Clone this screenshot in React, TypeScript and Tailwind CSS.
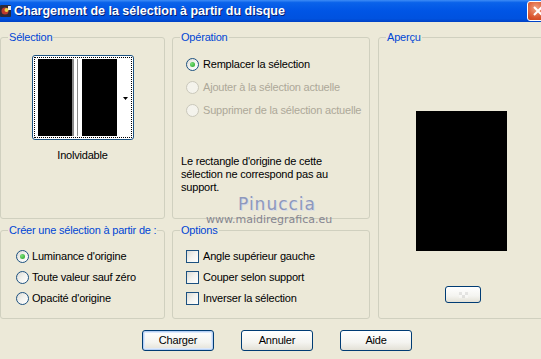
import React from 'react';

const Radio = ({ checked = false, disabled = false }: { checked?: boolean; disabled?: boolean }) => (
  <span
    className={`flex w-[13px] h-[13px] shrink-0 items-center justify-center rounded-full border ${
      disabled
        ? 'border-[#CAC8BB] bg-[#F4F3EC]'
        : 'border-[#1C5180] bg-[linear-gradient(135deg,#DCDBD5_0%,#F3F3EF_50%,#FFFFFF_100%)]'
    }`}
  >
    {checked && <span className="w-[5px] h-[5px] rounded-full bg-[radial-gradient(circle_at_35%_35%,#7BE07B,#21A121)]" />}
  </span>
);

const Check = () => (
  <span className="w-[13px] h-[13px] shrink-0 border border-[#1C5180] bg-[linear-gradient(135deg,#DCDBD5_0%,#F3F3EF_50%,#FFFFFF_100%)]" />
);

const Legend = ({ children }: { children: React.ReactNode }) => (
  <legend className="ml-[7px] whitespace-nowrap px-[1px] leading-[13px] text-[#0046D5]">{children}</legend>
);

const XpButton = ({ label, isDefault }: { label: string; isDefault?: boolean }) => (
  <button
    className={`w-[72px] h-[21px] rounded-[3px] border border-[#003C74] bg-[linear-gradient(to_bottom,#FFFFFF_0%,#F4F4F0_60%,#E3E1D6_100%)] text-[11px] leading-[13px] text-black ${
      isDefault ? 'shadow-[inset_0_0_0_1px_#B7D0F5,inset_0_0_0_2px_#DCE8FA]' : ''
    }`}
  >
    {label}
  </button>
);

export default function App() {
  return (
    <div className="relative w-[541px] h-[359px] overflow-hidden bg-[#ECE9D8] font-['Liberation_Sans',Arial,sans-serif] text-[11px] tracking-[-0.2px] text-black">
      {/* title bar */}
      <div className="flex h-[22px] items-center bg-[linear-gradient(to_bottom,#3D8CF6_0%,#0A62EA_12%,#0055E5_50%,#0052DF_85%,#0041C4_100%)]">
        <svg width="12" height="14" viewBox="0 0 12 14" className="shrink-0">
          <rect x="0" y="1" width="11" height="12" rx="1" fill="#2A2A3A" />
          <circle cx="5" cy="7" r="3.5" fill="#C0392B" />
          <circle cx="6.5" cy="6" r="2" fill="#E7D34A" />
          <rect x="8" y="2" width="3" height="4" fill="#EAEAEA" />
        </svg>
        <span className="ml-[2px] text-[12.5px] font-bold tracking-normal text-white [text-shadow:1px_1px_0_#0A1E6E]">
          Chargement de la sélection à partir du disque
        </span>
        <div className="ml-auto mr-[-8px] flex h-[20px] w-[22px] items-center justify-center rounded-[3px] border border-white bg-[radial-gradient(circle_at_40%_35%,#F0A080,#D8532C_60%,#C0401A)]">
          <svg width="12" height="12" viewBox="0 0 12 12">
            <path d="M2 2L10 10M10 2L2 10" stroke="white" strokeWidth="2" />
          </svg>
        </div>
      </div>

      {/* body */}
      <div className="grid grid-cols-[165px_198px_172px] grid-rows-[188px_95px] gap-x-[7px] gap-y-[5px] pt-[9px]">
        {/* Sélection */}
        <fieldset className="min-w-0 rounded-[3px] border border-[#D0D0BF]">
          <Legend>Sélection</Legend>
          <div className="mx-auto mt-[11px] h-[85px] w-[102px] rounded-[3px] border border-[#1C5180] bg-white p-[1px]">
            <div className="flex h-full w-full border border-dotted border-black bg-white pb-[1px] pl-[3px] pt-[1px]">
              <div className="h-full w-[34px] bg-black" />
              <div className="h-full w-[2px] bg-[#8A8A8A]" />
              <div className="h-full w-[3px] bg-white" />
              <div className="h-full w-[1px] bg-[#8A8A8A]" />
              <div className="h-full w-[4px] bg-white" />
              <div className="h-full w-[35px] bg-black" />
              <div className="relative h-full flex-1 bg-white">
                <svg width="5" height="3" viewBox="0 0 5 3" className="absolute right-[3px] top-[38px]">
                  <path d="M0 0H5L2.5 3Z" fill="black" />
                </svg>
              </div>
            </div>
          </div>
          <div className="mt-[9px] text-center leading-[13px]">Inolvidable</div>
        </fieldset>

        {/* Opération */}
        <fieldset className="min-w-0 rounded-[3px] border border-[#D0D0BF]">
          <Legend>Opération</Legend>
          <div className="flex flex-col gap-[10px] pl-[13px] pt-[14px]">
            <div className="flex h-[13px] items-center gap-[4px]">
              <Radio checked />
              <span className="leading-[13px]">Remplacer la sélection</span>
            </div>
            <div className="flex h-[13px] items-center gap-[4px] text-[#ACA899]">
              <Radio disabled />
              <span className="leading-[13px]">Ajouter à la sélection actuelle</span>
            </div>
            <div className="flex h-[13px] items-center gap-[4px] text-[#ACA899]">
              <Radio disabled />
              <span className="leading-[13px]">Supprimer de la sélection actuelle</span>
            </div>
          </div>
          <p className="mt-[38px] pl-[8px] leading-[13px]">
            Le rectangle d'origine de cette
            <br />
            sélection ne correspond pas au
            <br />
            support.
          </p>
        </fieldset>

        {/* Aperçu */}
        <fieldset className="row-span-2 ml-[1px] min-w-0 rounded-[3px] border border-[#D0D0BF]">
          <Legend>Aperçu</Legend>
          <div className="ml-[37px] mt-[67px] h-[140px] w-[91px] bg-black" />
          <div className="ml-[66px] mt-[35px] flex h-[17px] w-[36px] items-center justify-center rounded-[3px] border border-[#003C74] bg-[linear-gradient(to_bottom,#FFFFFF_0%,#F4F4F0_60%,#E3E1D6_100%)]">
            <div className="grid grid-cols-3 grid-rows-2 opacity-40">
              <span className="h-[3px] w-[3px] bg-[#C8C8C8]" />
              <span className="h-[3px] w-[3px] bg-white" />
              <span className="h-[3px] w-[3px] bg-[#C8C8C8]" />
              <span className="h-[3px] w-[3px] bg-white" />
              <span className="h-[3px] w-[3px] bg-[#C8C8C8]" />
              <span className="h-[3px] w-[3px] bg-white" />
            </div>
          </div>
        </fieldset>

        {/* Créer une sélection */}
        <fieldset className="min-w-0 rounded-[3px] border border-[#D0D0BF]">
          <Legend>Créer une sélection à partir de :</Legend>
          <div className="flex flex-col gap-[8px] pl-[15px] pt-[13px]">
            <div className="flex h-[13px] items-center gap-[3px]">
              <Radio checked />
              <span className="leading-[13px]">Luminance d'origine</span>
            </div>
            <div className="flex h-[13px] items-center gap-[3px]">
              <Radio />
              <span className="leading-[13px]">Toute valeur sauf zéro</span>
            </div>
            <div className="flex h-[13px] items-center gap-[3px]">
              <Radio />
              <span className="leading-[13px]">Opacité d'origine</span>
            </div>
          </div>
        </fieldset>

        {/* Options */}
        <fieldset className="min-w-0 rounded-[3px] border border-[#D0D0BF]">
          <Legend>Options</Legend>
          <div className="flex flex-col gap-[8px] pl-[13px] pt-[13px]">
            <div className="flex h-[13px] items-center gap-[4px]">
              <Check />
              <span className="leading-[13px]">Angle supérieur gauche</span>
            </div>
            <div className="flex h-[13px] items-center gap-[4px]">
              <Check />
              <span className="leading-[13px]">Couper selon support</span>
            </div>
            <div className="flex h-[13px] items-center gap-[4px]">
              <Check />
              <span className="leading-[13px]">Inverser la sélection</span>
            </div>
          </div>
        </fieldset>
      </div>

      {/* buttons */}
      <div className="mt-[11px] flex gap-[27px] pl-[142px]">
        <XpButton label="Charger" isDefault />
        <XpButton label="Annuler" />
        <XpButton label="Aide" />
      </div>

      {/* watermark */}
      <div className="pointer-events-none absolute left-[206px] top-[194px] flex w-[120px] flex-col items-start">
        <span className="ml-[32px] font-['DejaVu_Sans',sans-serif] text-[17px] leading-[20px] tracking-[1px] text-[#8E98BC] [text-shadow:1px_1px_0_#D8DCE8]">
          Pinuccia
        </span>
        <span className="font-['DejaVu_Sans',sans-serif] text-[11px] leading-[12px] tracking-normal text-[#858590]">
          www.maidiregrafica.eu
        </span>
      </div>
    </div>
  );
}
